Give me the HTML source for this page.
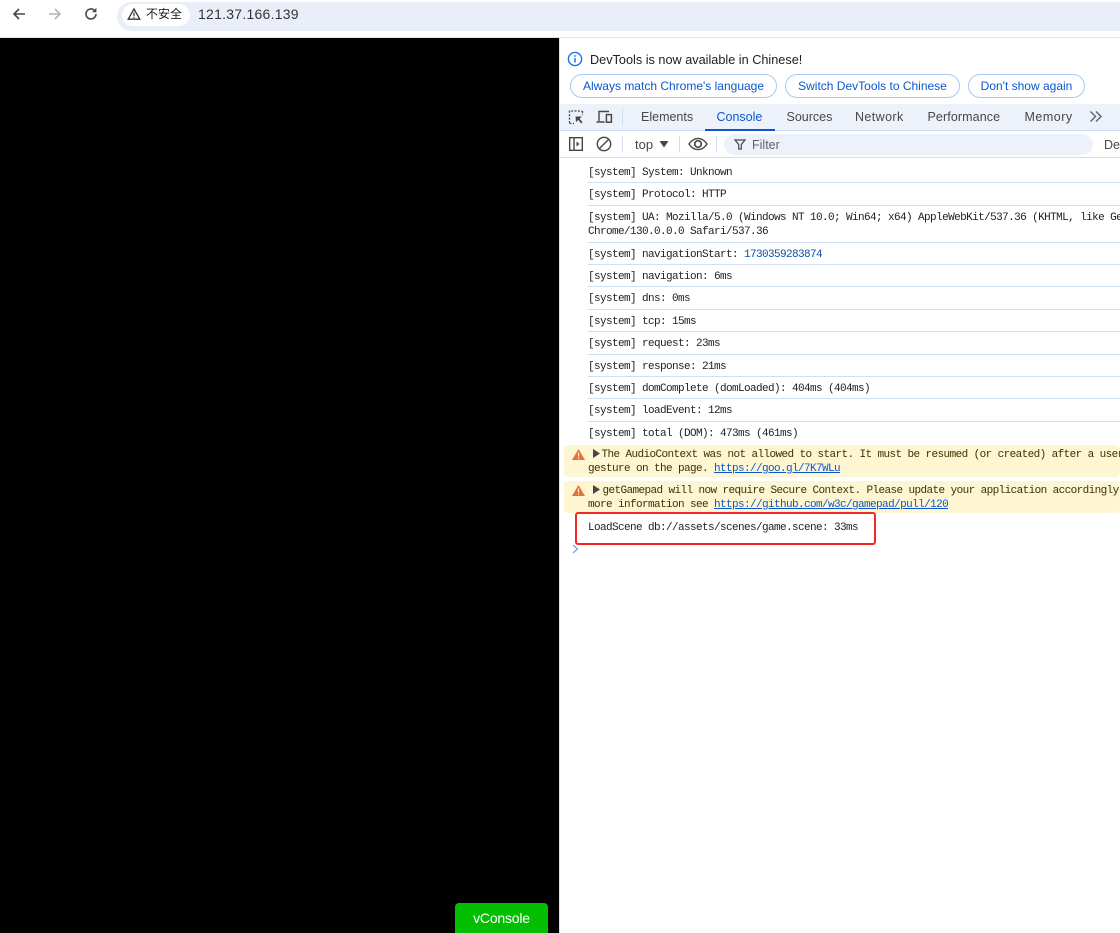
<!DOCTYPE html>
<html><head><meta charset="utf-8">
<style>
html,body{margin:0;padding:0;background:#fff}
#r{position:relative;width:1120px;height:933px;overflow:hidden;background:#fff;font-family:"Liberation Sans",sans-serif}
#r div,#r svg{position:absolute}
.t{white-space:pre;line-height:14px;font-family:"Liberation Mono","Noto Sans CJK SC",monospace;font-size:11px;letter-spacing:-.6px;color:#222;left:588px;margin-top:1px}
.s{left:588px;right:0;height:1px;background:#d0dff7}
.b{height:22px;line-height:22px;border:1px solid #a8c7fa;border-radius:12px;color:#0b57d0;font-size:12px;text-align:center;top:74px;white-space:pre}
.tab{top:109px;font-size:12.5px;line-height:16px;color:#474747;white-space:pre}
.w{left:564px;right:0;background:#fef5d3;border-radius:4px}
a{color:#0b57d0;text-decoration:underline}
</style></head><body>
<div id="r">
<div style="left:0;top:0;width:1120px;height:37px;background:#fff"></div>
<svg style="left:11px;top:6px" width="16" height="16" viewBox="0 0 16 16"><path d="M14 8H3M8 3L3 8l5 5" fill="none" stroke="#474747" stroke-width="1.6"/></svg>
<svg style="left:47px;top:6px" width="16" height="16" viewBox="0 0 16 16"><path d="M2 8h11M8 3l5 5-5 5" fill="none" stroke="#b4b4b4" stroke-width="1.6"/></svg>
<svg style="left:83px;top:6px" width="16" height="16" viewBox="0 0 16 16"><path d="M13 8a5 5 0 1 1-1.5-3.600" fill="none" stroke="#474747" stroke-width="1.6"/><path d="M13.400 1.800v4.400H9z" fill="#474747"/></svg>
<div style="left:117px;top:2px;width:1040px;height:29px;background:#e9eef8;border-radius:15px"></div>
<div style="left:122px;top:4px;width:68px;height:22px;background:#fff;border-radius:11px"></div>
<svg style="left:127px;top:7px" width="14" height="14" viewBox="0 0 14 14"><path d="M7 2L1.200 12.200h11.600z" fill="none" stroke="#333" stroke-width="1.3"/><path d="M7 5.500v3.600M7 9.900v1.200" stroke="#333" stroke-width="1.2"/></svg>
<div style="left:146px;top:7px;font-size:12px;line-height:15px;color:#222;font-family:'Liberation Sans','Noto Sans CJK SC',sans-serif">不安全</div>
<div style="left:198px;top:5px;font-size:14px;line-height:18px;color:#333;letter-spacing:.25px">121.37.166.139</div>
<div style="left:0;top:37px;width:1120px;height:1px;background:#e4e4e4"></div>

<div style="left:0;top:38px;width:559px;height:895px;background:#000"></div>
<div style="left:559px;top:38px;width:1px;height:895px;background:#d0dff7"></div>
<div style="left:455px;top:903px;width:93px;height:30px;background:#04be02;border-radius:4px 4px 0 0;color:#fff;font-size:14px;line-height:30px;text-align:center;letter-spacing:-.2px">vConsole</div>

<svg style="left:567px;top:51px" width="16" height="16" viewBox="0 0 16 16"><circle cx="8" cy="8" r="6.600" fill="none" stroke="#1a73e8" stroke-width="1.4"/><path d="M8 7v4.500M8 4.300v1.500" stroke="#1a73e8" stroke-width="1.5"/></svg>
<div style="left:590px;top:52px;font-size:12.7px;line-height:16px;color:#1f1f1f">DevTools is now available in Chinese!</div>
<div class="b" style="left:570px;width:205px">Always match Chrome's language</div>
<div class="b" style="left:785px;width:173px">Switch DevTools to Chinese</div>
<div class="b" style="left:968px;width:115px">Don't show again</div>

<div style="left:560px;top:104px;right:0;height:26px;background:#edf2fa"></div>
<div style="left:560px;top:130px;right:0;height:1px;background:#d0dff7"></div>
<svg style="left:568px;top:109px" width="17" height="17" viewBox="0 0 17 17"><path d="M1.500 14V2h12.500" fill="none" stroke="#474747" stroke-width="1.3" stroke-dasharray="2 1.400"/><path d="M1.500 14.500H6M14.500 2v4" stroke="#474747" stroke-width="1.3" stroke-dasharray="2 1.400"/><path d="M7.500 7.500h6.500l-2.400 2.200 3 3.600-1.400 1.200-3-3.600-2.200 2.400z" fill="#474747"/></svg>
<svg style="left:596px;top:109px" width="17" height="16" viewBox="0 0 17 16"><path d="M3 12V2.500h10M.5 13h8" fill="none" stroke="#474747" stroke-width="1.4"/><rect x="10.400" y="5.600" width="5" height="7.600" fill="none" stroke="#474747" stroke-width="1.5"/></svg>
<div style="left:622px;top:108px;width:1px;height:18px;background:#d0dff7"></div>
<div class="tab" style="left:641px">Elements</div>
<div class="tab" style="left:716.500px;color:#0b57d0">Console</div>
<div style="left:705px;top:129px;width:70px;height:2px;background:#0b57d0"></div>
<div class="tab" style="left:786.500px">Sources</div>
<div class="tab" style="left:855px;letter-spacing:.4px">Network</div>
<div class="tab" style="left:927.500px;letter-spacing:.1px">Performance</div>
<div class="tab" style="left:1024.500px;letter-spacing:.5px">Memory</div>
<svg style="left:1089px;top:110px" width="14" height="13" viewBox="0 0 14 13"><path d="M1.500 1.500l5 5-5 5M7 1.500l5 5-5 5" fill="none" stroke="#5f6368" stroke-width="1.4"/></svg>

<svg style="left:568px;top:136px" width="16" height="16" viewBox="0 0 16 16"><rect x="1.700" y="1.700" width="12.600" height="12.600" fill="none" stroke="#474747" stroke-width="1.4"/><path d="M6 2v12" stroke="#474747" stroke-width="1.4"/><path d="M8.500 5.500L11.500 8l-3 2.500z" fill="#474747"/></svg>
<svg style="left:596px;top:136px" width="16" height="16" viewBox="0 0 16 16"><circle cx="8" cy="8" r="6.700" fill="none" stroke="#474747" stroke-width="1.4"/><path d="M3.500 12.500l9-9" stroke="#474747" stroke-width="1.4"/></svg>
<div style="left:622px;top:136px;width:1px;height:16px;background:#d0dff7"></div>
<div style="left:635px;top:137px;font-size:13px;line-height:16px;color:#474747">top</div>
<svg style="left:659px;top:141px" width="10" height="7" viewBox="0 0 10 7"><path d="M.5 0h9L5 6.500z" fill="#474747"/></svg>
<div style="left:679px;top:136px;width:1px;height:16px;background:#d0dff7"></div>
<svg style="left:688px;top:137px" width="20" height="14" viewBox="0 0 20 14"><path d="M1 7c2.500-3.800 5.400-5.600 9-5.600s6.500 1.800 9 5.600c-2.500 3.800-5.400 5.600-9 5.600S3.500 10.800 1 7z" fill="none" stroke="#474747" stroke-width="1.4"/><circle cx="10" cy="7" r="3.300" fill="none" stroke="#474747" stroke-width="1.7"/></svg>
<div style="left:716px;top:136px;width:1px;height:16px;background:#d0dff7"></div>
<div style="left:724px;top:134px;width:369px;height:21px;background:#edf2fa;border-radius:11px"></div>
<svg style="left:734px;top:139px" width="12" height="11" viewBox="0 0 12 11"><path d="M1 1h10L7.300 5.500V10H4.700V5.500z" fill="none" stroke="#474747" stroke-width="1.200"/></svg>
<div style="left:752px;top:137px;font-size:12.500px;line-height:16px;color:#5f6368">Filter</div>
<div style="left:1104px;top:137px;font-size:12.500px;line-height:16px;color:#474747">De</div>
<div style="left:560px;top:157px;right:0;height:1px;background:#d0dff7"></div>

<div class="t" style="top:165px">[system] System: Unknown</div><div class="s" style="top:182px"></div>
<div class="t" style="top:187px">[system] Protocol: HTTP</div><div class="s" style="top:205px"></div>
<div class="t" style="top:210px">[system] UA: Mozilla/5.0 (Windows NT 10.0; Win64; x64) AppleWebKit/537.36 (KHTML, like Gecko)</div>
<div class="t" style="top:224px">Chrome/130.0.0.0 Safari/537.36</div><div class="s" style="top:242px"></div>
<div class="t" style="top:247px">[system] navigationStart: <span style="color:#0b4ea2">1730359283874</span></div><div class="s" style="top:264px"></div>
<div class="t" style="top:269px">[system] navigation: 6ms</div><div class="s" style="top:286px"></div>
<div class="t" style="top:291px">[system] dns: 0ms</div><div class="s" style="top:309px"></div>
<div class="t" style="top:314px">[system] tcp: 15ms</div><div class="s" style="top:331px"></div>
<div class="t" style="top:336px">[system] request: 23ms</div><div class="s" style="top:354px"></div>
<div class="t" style="top:359px">[system] response: 21ms</div><div class="s" style="top:376px"></div>
<div class="t" style="top:381px">[system] domComplete (domLoaded): 404ms (404ms)</div><div class="s" style="top:398px"></div>
<div class="t" style="top:403px">[system] loadEvent: 12ms</div><div class="s" style="top:421px"></div>
<div class="t" style="top:426px">[system] total (DOM): 473ms (461ms)</div>

<div class="w" style="top:445px;height:32px"></div>
<div class="w" style="top:481px;height:32px"></div>
<svg style="left:572px;top:449px" width="13" height="11" viewBox="0 0 13 11"><path d="M6.500 0L13 11H0z" fill="#e8713a"/><path d="M6.500 3.500v4M6.500 8.500v1.300" stroke="#fef5d3" stroke-width="1.200"/></svg>
<svg style="left:572px;top:485px" width="13" height="11" viewBox="0 0 13 11"><path d="M6.500 0L13 11H0z" fill="#e8713a"/><path d="M6.500 3.500v4M6.500 8.500v1.300" stroke="#fef5d3" stroke-width="1.200"/></svg>
<svg style="left:593px;top:449px" width="7" height="9" viewBox="0 0 7 9"><path d="M0 0l7 4.500L0 9z" fill="#474747"/></svg>
<svg style="left:593px;top:485px" width="7" height="9" viewBox="0 0 7 9"><path d="M0 0l7 4.500L0 9z" fill="#474747"/></svg>
<div class="t" style="left:601.500px;top:447px;color:#3d3200">The AudioContext was not allowed to start. It must be resumed (or created) after a user</div>
<div class="t" style="top:461px;color:#3d3200">gesture on the page. <a>https://goo.gl/7K7WLu</a></div>
<div class="t" style="left:602.500px;top:483px;color:#3d3200">getGamepad will now require Secure Context. Please update your application accordingly. For</div>
<div class="t" style="top:497px;color:#3d3200">more information see <a>https://github.com/w3c/gamepad/pull/120</a></div>

<div class="t" style="top:520px">LoadScene db://assets/scenes/game.scene: 33ms</div>
<div style="left:575px;top:512px;width:297px;height:28.500px;border:2.500px solid #f02a22;border-radius:3px;box-sizing:content-box"></div>
<svg style="left:572px;top:544px" width="7" height="10" viewBox="0 0 7 10"><path d="M1 1l4.500 4L1 9" fill="none" stroke="#7aa7f0" stroke-width="1.300"/></svg>
</div>
</body></html>
